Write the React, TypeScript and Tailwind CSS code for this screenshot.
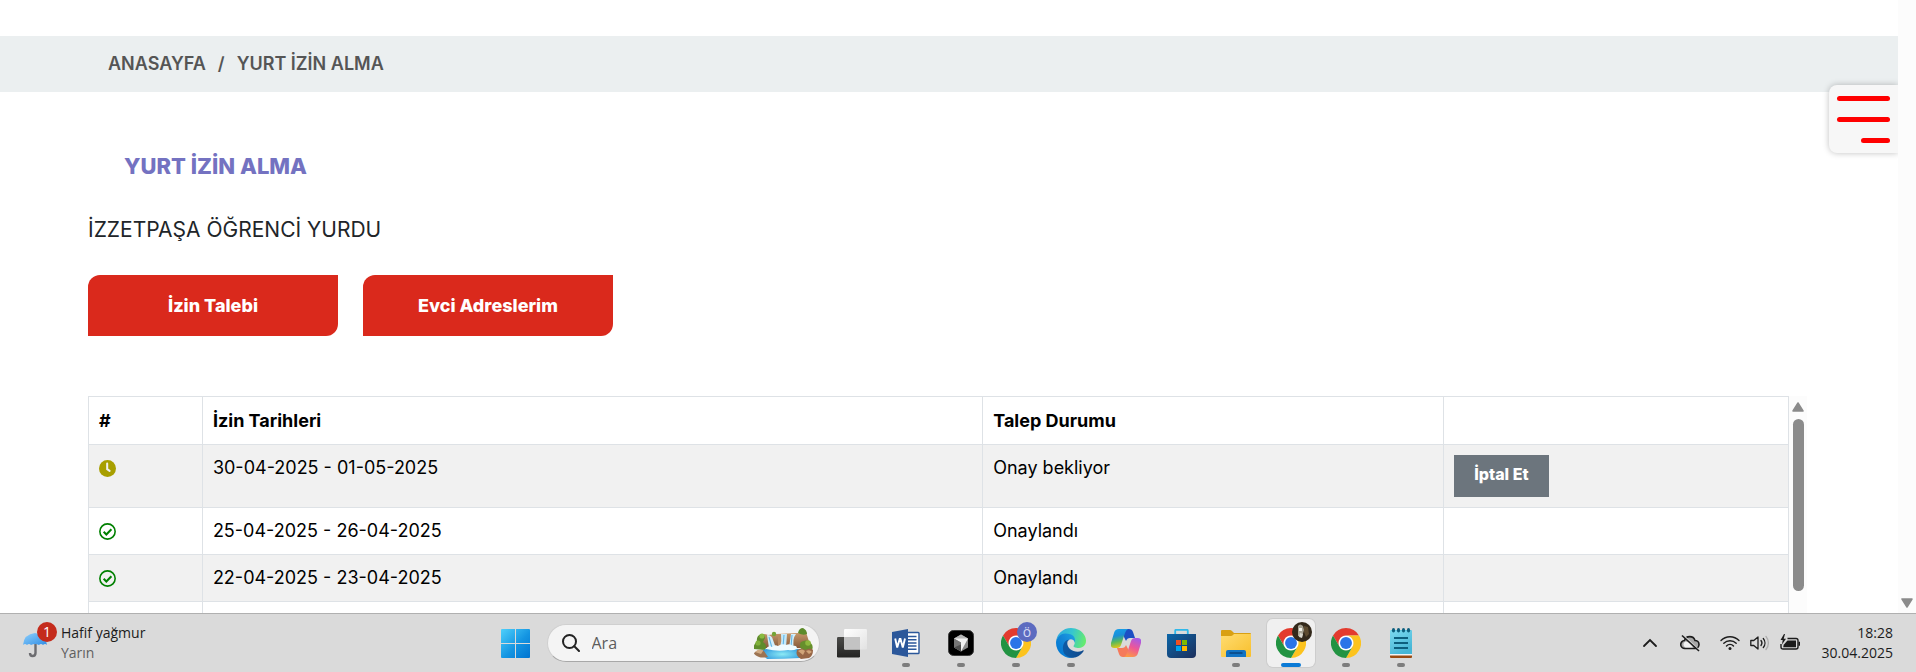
import type { ReactNode } from 'react';

type Leave = { dates: string; status: string; pending?: boolean };

const leaves: Leave[] = [
  { dates: '30-04-2025 - 01-05-2025', status: 'Onay bekliyor', pending: true },
  { dates: '25-04-2025 - 26-04-2025', status: 'Onaylandı' },
  { dates: '22-04-2025 - 23-04-2025', status: 'Onaylandı' },
];

function ClockIcon() {
  return (
    <svg viewBox="0 0 16 16" className="size-[17px]" role="img" aria-label="Bekliyor">
      <circle cx="8" cy="8" r="8" fill="#a89f00" />
      <path d="M7.7 3.4v5.2l2.3 1.6" fill="none" stroke="#f1f1f1" strokeWidth="1.9" strokeLinecap="round" />
    </svg>
  );
}

function CheckIcon() {
  return (
    <svg viewBox="0 0 16 16" className="size-[17px]" role="img" aria-label="Onaylandı" fill="none" stroke="#008000">
      <circle cx="8" cy="8" r="7.2" strokeWidth="1.5" />
      <path d="M4.4 8.3l2.5 2.5 4.8-4.9" strokeWidth="1.9" />
    </svg>
  );
}

function WindowsLogo() {
  return (
    <svg viewBox="0 0 29 29" className="size-[29px]" aria-hidden="true">
      <defs>
        <linearGradient id="win" x1="0" y1="0" x2="29" y2="29" gradientUnits="userSpaceOnUse">
          <stop offset="0" stopColor="#4fd0fb" />
          <stop offset="0.55" stopColor="#1495e2" />
          <stop offset="1" stopColor="#0073d0" />
        </linearGradient>
      </defs>
      <g fill="url(#win)">
        <path d="M1 0h13v14H0V1q0-1 1-1z" />
        <path d="M15 0h13q1 0 1 1v13H15z" />
        <path d="M0 15h14v14H1q-1 0-1-1z" />
        <path d="M15 15h14v13q0 1-1 1H15z" />
      </g>
    </svg>
  );
}

function Waterfall() {
  return (
    <svg viewBox="0 0 59 31" className="h-[31px] w-[59px]" aria-hidden="true">
      <defs>
        <radialGradient id="pool" cx="0.5" cy="0.6" r="0.6">
          <stop offset="0" stopColor="#8ceaf5" />
          <stop offset="1" stopColor="#2f97dd" />
        </radialGradient>
        <linearGradient id="rock" x1="0" y1="0" x2="0" y2="1">
          <stop offset="0" stopColor="#c99b6c" />
          <stop offset="1" stopColor="#86593a" />
        </linearGradient>
      </defs>
      <path d="M6 7q4-2 8 0l8-1 22-1 8-1 5 16H2z" fill="url(#rock)" />
      <path d="M0 21q-1-5 3-7-1-6 4-8 4 0 4 4l-2 4q5 3 2 8z" fill="#5f8c2c" />
      <circle cx="4" cy="15" r="2.6" fill="#80b03a" />
      <circle cx="8" cy="8" r="2.6" fill="#8abb40" />
      <circle cx="20" cy="6" r="2.2" fill="#74a436" />
      <path d="M44 5q1-5 5-5 4 2 4 6-4 2-9-1z" fill="#5d8b2b" />
      <path d="M47 14q5-3 9 0 4 4 2 8l-9 1q-5-4-2-9z" fill="#668f2c" />
      <circle cx="54" cy="15" r="2.8" fill="#8cb83e" />
      <path d="M24 8q4-3 7 0l-1 10h-6z" fill="#b98a60" />
      <path d="M13 7q5 0 6 5l3 8h-7z" fill="#d2effb" />
      <path d="M27 6h6l-1 14h-6q2-7 1-14z" fill="#c4e9fa" />
      <path d="M37 6h5q-4 5-2 14h-5z" fill="#d2effb" />
      <path d="M15 9l3 11M30 7l-1 12M38 7l-1 12" stroke="#63b6e6" strokeWidth="1.1" fill="none" />
      <path d="M9 22q16-6 39 0l-2 8q-16 1-33 1-5-4-4-9z" fill="url(#pool)" />
      <path d="M12 21q2-4 6-2 3-3 6-1 4-3 8-1 4-2 7 1 4-1 4 3-4 2-9 1-10 2-22-1z" fill="#f0fbff" />
      <path d="M0 25q5-5 10-2l4 6q-6 1-9 0-5-2-5-4z" fill="#9c7352" />
      <path d="M1 24q4-4 8-1l-2 3z" fill="#d0aa83" />
      <path d="M43 22q5-3 8 0 6-3 8 0 0 6-4 8l-8 1q-6-3-4-9z" fill="#986747" />
      <path d="M44 23q4-3 7 0l-2 4zM52 23q4-2 6 1l-3 2z" fill="#d1a579" />
    </svg>
  );
}

function TaskViewIcon() {
  return (
    <svg viewBox="0 0 31 29" className="h-[29px] w-[31px]" aria-hidden="true">
      <defs>
        <linearGradient id="tvDark" x1="0" y1="0" x2="0" y2="1">
          <stop offset="0" stopColor="#4a4a48" />
          <stop offset="1" stopColor="#242423" />
        </linearGradient>
        <linearGradient id="tvLight" x1="0" y1="0" x2="1" y2="1">
          <stop offset="0" stopColor="#ffffff" />
          <stop offset="1" stopColor="#e2e2e2" />
        </linearGradient>
      </defs>
      <rect x="1" y="8" width="23" height="20.5" rx="1.2" fill="url(#tvDark)" />
      <rect x="8" y="0" width="23" height="20.5" rx="1.2" fill="url(#tvLight)" />
      <path d="M8 8h16v12.5H9q-1 0-1-1z" fill="#c3c3c3" />
    </svg>
  );
}

function WordIcon() {
  return (
    <svg viewBox="0 0 28 28" className="size-7" aria-hidden="true">
      <rect x="14" y="3.5" width="13" height="21" rx="0.8" fill="#fff" stroke="#2b579a" strokeWidth="1.4" />
      <path d="M15 7.5h9.5M15 10.7h9.5M15 13.9h9.5M15 17.1h9.5M15 20.3h9.5" stroke="#2b579a" strokeWidth="1.5" />
      <path d="M0 3L16 0v28L0 25z" fill="#2b579a" />
      <path d="M3.2 9.5l2 9 2.5-8.500h.8l2.300 8.500 2.200-9" fill="none" stroke="#fff" strokeWidth="1.9" />
    </svg>
  );
}

function CubeIcon() {
  return (
    <svg viewBox="0 0 26 26" className="size-[26px]" aria-hidden="true">
      <rect x="0.5" y="0.5" width="25" height="25" rx="5" fill="#000" stroke="#3c3c3c" />
      <path d="M13 4.500l7 4v9l-7 4-7-4v-9z" fill="#8b8b8b" />
      <path d="M13 4.500l7 4-7 3.500-7-3.500z" fill="#b5b5b5" />
      <path d="M6 8.500h14L13 21.500V12.500z" fill="#f2f2f2" />
      <path d="M6 8.500l7 4v9l-7-4z" fill="#777" />
      <path d="M6 17.500l7-3v7z" fill="#505050" />
    </svg>
  );
}

function ChromeIcon() {
  return (
    <svg viewBox="0 0 48 48" className="size-[30px]" aria-hidden="true">
      <circle cx="24" cy="24" r="12" fill="#fff" />
      <path fill="#e33b2e" d="M24 12H44.781a23.994 23.994 0 0 0-41.564.003L13.608 30l.009-.002A11.985 11.985 0 0 1 24 12Z" />
      <path fill="#fcc31e" d="M34.391 30.003 24.001 48A23.994 23.994 0 0 0 44.780 12.003H23.999l-.003.009A11.985 11.985 0 0 1 34.391 30.003Z" />
      <path fill="#229342" d="M13.609 30.003 3.218 12.006A23.994 23.994 0 0 0 24.003 48L34.393 30.003l-.007-.007a11.985 11.985 0 0 1-20.777.007Z" />
      <circle cx="24" cy="24" r="9.5" fill="#2a74e8" />
    </svg>
  );
}

function EdgeIcon() {
  return (
    <svg viewBox="0 0 256 256" className="size-[30px]" aria-hidden="true">
      <defs>
        <linearGradient id="edgeA" x1="0.1" y1="0.5" x2="1" y2="0.5">
          <stop offset="0" stopColor="#0c59a4" />
          <stop offset="1" stopColor="#114a8b" />
        </linearGradient>
        <linearGradient id="edgeB" x1="1" y1="0.2" x2="0.2" y2="0.9">
          <stop offset="0" stopColor="#1b9de2" />
          <stop offset="0.5" stopColor="#1385d6" />
          <stop offset="1" stopColor="#0078d4" />
        </linearGradient>
        <linearGradient id="edgeC" x1="0" y1="0.3" x2="1" y2="0.5">
          <stop offset="0" stopColor="#2fa9e0" />
          <stop offset="0.5" stopColor="#36c6cf" />
          <stop offset="1" stopColor="#66eb6e" />
        </linearGradient>
      </defs>
      <path fill="url(#edgeC)" d="M152.330 148.860c-.81 1.050-3.300 2.500-3.300 5.660 0 2.610 1.700 5.120 4.720 7.230 14.380 10 41.490 8.680 41.560 8.680a59.560 59.560 0 0 0 30.270-8.350 61.380 61.380 0 0 0 30.430-52.880c.26-22.410-8-37.310-11.340-43.910C223.480 23.840 177.720 0 128 0A128 128 0 0 0 0 126.200c.48-36.540 36.800-66.050 80-66.050 3.500 0 23.460.34 42 10.070 16.340 8.580 24.900 18.940 30.850 29.210 6.180 10.670 7.280 24.150 7.280 29.520 0 5.370-2.740 13.330-7.800 19.910z" />
      <path fill="url(#edgeB)" d="M105.730 241.420A79.200 79.200 0 0 1 83 220.080a80.720 80.720 0 0 1 29.500-120.770c3.120-1.470 8.450-4.150 15.540-4a32.350 32.350 0 0 1 25.690 13 31.880 31.880 0 0 1 6.360 18.660c0-.21 24.460-79.600-80-79.600-43.900 0-80 41.660-80 78.210a130.150 130.150 0 0 0 12.110 56 128 128 0 0 0 156.380 67.110 75.550 75.550 0 0 1-62.780-7.270z" />
      <path fill="url(#edgeA)" transform="translate(-4.630 -4.920)" d="M235.680 195.460a93.730 93.730 0 0 1-10.540 4.710 101.870 101.870 0 0 1-35.900 6.460c-47.320 0-88.540-32.550-88.540-74.320A31.480 31.480 0 0 1 117.130 105c-42.800 1.800-53.800 46.400-53.800 72.530 0 73.880 68.090 81.370 82.760 81.370 7.910 0 19.840-2.300 27-4.560l1.310-.44a128.340 128.340 0 0 0 66.600-52.800 4 4 0 0 0-5.320-5.640z" />
    </svg>
  );
}

function CopilotIcon() {
  return (
    <svg viewBox="0 0 30 28" className="h-7 w-[30px]" aria-hidden="true">
      <defs>
        <linearGradient id="copA" x1="0.3" y1="0" x2="0.5" y2="1">
          <stop offset="0" stopColor="#179fe8" />
          <stop offset="0.35" stopColor="#1a8fd8" />
          <stop offset="0.65" stopColor="#58b95c" />
          <stop offset="1" stopColor="#f2c80f" />
        </linearGradient>
        <linearGradient id="copB" x1="0.7" y1="0" x2="0.3" y2="1">
          <stop offset="0" stopColor="#a65be8" />
          <stop offset="0.5" stopColor="#ee5796" />
          <stop offset="1" stopColor="#fb9a45" />
        </linearGradient>
      </defs>
      <path d="M13 0h5q3 0 4 3l2 6h-5q-3 0-4 3l-2-4z" fill="#1c4fc4" />
      <path d="M17 28h-5q-3 0-4-3l-2-6h5q3 0 4-3l2 4z" fill="#f57a5b" />
      <path d="M8 0h9q-2 1-3 4l-4 12q-1 3-4 3H3q-4 0-3-5l3-10q1-4 5-4z" fill="url(#copA)" />
      <path d="M22 28h-9q2-1 3-4l4-12q1-3 4-3h3q4 0 3 5l-3 10q-1 4-5 4z" fill="url(#copB)" />
    </svg>
  );
}

function StoreIcon() {
  return (
    <svg viewBox="0 0 29 29" className="size-[29px]" aria-hidden="true">
      <defs>
        <linearGradient id="store" x1="0" y1="0" x2="1" y2="1">
          <stop offset="0" stopColor="#0b66a8" />
          <stop offset="1" stopColor="#1d2f5c" />
        </linearGradient>
      </defs>
      <path d="M8.200 6V1.800q0-1 1-1h10.600q1 0 1 1V6" fill="none" stroke="#2fb8ea" strokeWidth="1.8" />
      <path d="M0 5h29v20q0 4-4 4H4q-4 0-4-4z" fill="url(#store)" />
      <path d="M9 11h5v5H9z" fill="#f25022" />
      <path d="M15 11h5v5h-5z" fill="#7fba00" />
      <path d="M9 17h5v5H9z" fill="#00a4ef" />
      <path d="M15 17h5v5h-5z" fill="#ffb900" />
    </svg>
  );
}

function FolderIcon() {
  return (
    <svg viewBox="0 0 30 27" className="h-[27px] w-[30px]" aria-hidden="true">
      <defs>
        <linearGradient id="folder" x1="0" y1="0" x2="1" y2="1">
          <stop offset="0" stopColor="#ffdc70" />
          <stop offset="1" stopColor="#f8bf2c" />
        </linearGradient>
      </defs>
      <path d="M1 0h8q1 0 2 1l2 2h16q1 0 1 1v5H0V1q0-1 1-1z" fill="#d9a012" />
      <path d="M0 6h10q1 0 2-1l1-1h17v22q0 1-1 1H1q-1 0-1-1z" fill="url(#folder)" />
      <path d="M5 27v-5q0-2 2-2h16q2 0 2 2v5z" fill="#1273c4" />
      <path d="M9 23h12" stroke="#0a4680" strokeWidth="1.4" strokeLinecap="round" />
    </svg>
  );
}

function NotepadIcon() {
  return (
    <svg viewBox="0 0 22 31" className="h-[31px] w-[22px]" aria-hidden="true">
      <defs>
        <linearGradient id="pad" x1="0" y1="0" x2="0.5" y2="1">
          <stop offset="0" stopColor="#7ddaf0" />
          <stop offset="1" stopColor="#46b6d6" />
        </linearGradient>
      </defs>
      <path d="M0 26h22v3q0 1-1 1H1q-1 0-1-1z" fill="#9a4a12" />
      <path d="M0 25h22v2.500H0z" fill="#f3f3f3" />
      <path d="M0 3q0-1 1-1h20q1 0 1 1v23H0z" fill="url(#pad)" />
      <path d="M4 10h14M4 15h14M4 20h14" stroke="#0d5f7e" strokeWidth="2" />
      <g fill="#0d5f7e">
        <ellipse cx="3.5" cy="2.2" rx="1.6" ry="2.2" />
        <ellipse cx="8.5" cy="2.2" rx="1.6" ry="2.2" />
        <ellipse cx="13.5" cy="2.2" rx="1.6" ry="2.2" />
        <ellipse cx="18.5" cy="2.2" rx="1.6" ry="2.2" />
      </g>
    </svg>
  );
}

function AvatarPhoto() {
  return (
    <svg viewBox="0 0 20 20" className="absolute -right-1.5 -top-1.5 size-5" aria-hidden="true">
      <circle cx="10" cy="10" r="10" fill="#33291b" />
      <path d="M6 4q2-3 5 0l1 4-2 7-4-1z" fill="#a9a595" />
      <path d="M7 6h3v3H7z" fill="#f2f2ea" />
      <path d="M12 4l4 1 1 7-3 3-2-5z" fill="#5d4b30" />
      <path d="M8 11l3 1-1 4-3-1z" fill="#d8d6cc" />
    </svg>
  );
}

type App = { name: string; icon: ReactNode; state?: 'open' | 'active' };

const apps: App[] = [
  { name: 'Görev görünümü', icon: <TaskViewIcon /> },
  { name: 'Word', icon: <WordIcon />, state: 'open' },
  { name: 'Cursor', icon: <CubeIcon />, state: 'open' },
  {
    name: 'Chrome profil Ö',
    icon: (
      <>
        <ChromeIcon />
        <span className="absolute -right-1.5 -top-1.5 flex size-5 items-center justify-center rounded-full bg-[#5c6bc0] text-sm leading-none text-[#d5daf5]">
          ö
        </span>
      </>
    ),
    state: 'open',
  },
  { name: 'Edge', icon: <EdgeIcon />, state: 'open' },
  { name: 'Copilot', icon: <CopilotIcon /> },
  { name: 'Microsoft Store', icon: <StoreIcon /> },
  { name: 'Dosya Gezgini', icon: <FolderIcon />, state: 'open' },
  {
    name: 'Chrome profil',
    icon: (
      <>
        <ChromeIcon />
        <AvatarPhoto />
      </>
    ),
    state: 'active',
  },
  { name: 'Chrome', icon: <ChromeIcon />, state: 'open' },
  { name: 'Not Defteri', icon: <NotepadIcon />, state: 'open' },
];

function TaskbarApp({ app }: { app: App }) {
  const active = app.state === 'active';
  return (
    <div className="flex w-[55px] justify-center">
      <button
        type="button"
        aria-label={app.name}
        className={
          active
            ? 'relative flex size-12 items-center justify-center rounded-md bg-[#f0f0f0] ring-1 ring-[#cdcdcd]'
            : 'relative flex size-12 items-center justify-center'
        }
      >
        <span className="relative flex">{app.icon}</span>
        {app.state && (
          <span
            className={
              active
                ? 'absolute bottom-0 left-1/2 h-1 w-5 -translate-x-1/2 rounded-full bg-[#0a7ad6]'
                : 'absolute bottom-0 left-1/2 h-1 w-2 -translate-x-1/2 rounded-full bg-[#7d7d7d]'
            }
          />
        )}
      </button>
    </div>
  );
}

function Taskbar() {
  return (
    <footer className="grid h-[59px] shrink-0 grid-cols-[1fr_auto_1fr] items-center border-t border-[#b0b0b0] bg-[#dadada] font-['Open_Sans','Noto_Sans',sans-serif] text-sm text-[#1c1c1c]">
      <button type="button" className="flex items-center gap-2.5 justify-self-start pl-[23px] text-left">
        <span className="relative flex">
          <svg viewBox="0 0 28 30" className="h-[30px] w-7" aria-hidden="true">
            <defs>
              <linearGradient id="umb" x1="0" y1="0" x2="1" y2="1">
                <stop offset="0" stopColor="#8fd0fb" />
                <stop offset="1" stopColor="#2e8de6" />
              </linearGradient>
            </defs>
            <path d="M12.500 14v11q0 3-3 3-2.500 0-2.500-3" fill="none" stroke="#6c6c70" strokeWidth="2.4" />
            <path d="M0 17q1-11 12-12 11 1 12 12-2-2-4 0-2-2-4 0-4-2-8 0-2-2-4 0-2-2-4 0z" fill="url(#umb)" />
          </svg>
          <span className="absolute -right-1.5 -top-1.5 flex size-5 items-center justify-center rounded-full bg-[#c42b1c] text-sm leading-none text-white">
            1
          </span>
        </span>
        <span className="flex flex-col leading-5">
          <span>Hafif yağmur</span>
          <span className="text-[#5f5f5f]">Yarın</span>
        </span>
      </button>

      <div className="flex items-center">
        <button type="button" aria-label="Başlat" className="flex w-[55px] justify-center">
          <WindowsLogo />
        </button>
        <label className="mx-1 flex h-[38px] w-[273px] items-center rounded-full border border-[#cfcfcf] border-b-[#a8a8a8] bg-[#f4f4f4] pl-3.5 pr-1.5">
          <svg viewBox="0 0 18 18" className="size-[18px] shrink-0" fill="none" stroke="#222" strokeWidth="2" strokeLinecap="round" aria-hidden="true">
            <circle cx="7.5" cy="7.5" r="6.5" />
            <path d="M12.300 12.300L17 17" />
          </svg>
          <input
            type="text"
            aria-label="Ara"
            placeholder="Ara"
            className="ml-3 w-full min-w-0 bg-transparent text-base outline-none placeholder:text-[#5c5c5c]"
          />
          <span className="shrink-0">
            <Waterfall />
          </span>
        </label>
        {apps.map((app) => (
          <TaskbarApp key={app.name} app={app} />
        ))}
      </div>

      <div className="flex items-center justify-self-end pr-[23px]">
        <button type="button" aria-label="Gizli simgeler" className="mr-[22px]">
          <svg viewBox="0 0 16 16" className="size-4" fill="none" stroke="#1c1c1c" strokeWidth="1.8" strokeLinecap="round" aria-hidden="true">
            <path d="M2 11l6-6 6 6" />
          </svg>
        </button>
        <svg viewBox="0 0 20 18" className="mr-5 h-[18px] w-5" aria-hidden="true">
          <path d="M5 14.500a4 4 0 0 1-.5-8A5.500 5.500 0 0 1 15 6.500a4 4 0 0 1 0 8z" fill="#a8a8a8" stroke="#1c1c1c" strokeWidth="1.6" />
          <path d="M5.500 13.500a3.200 3.200 0 0 1 0-6q4 0 7.500 6z" fill="#f0f0f0" />
          <path d="M3.500 1.500l16 15" stroke="#dadada" strokeWidth="1.4" />
          <path d="M2 1.500l17 15.500" stroke="#1c1c1c" strokeWidth="1.6" />
        </svg>
        <button type="button" aria-label="Ağ, ses ve pil" className="flex items-center gap-2.5">
          <svg viewBox="0 0 20 18" className="h-[18px] w-5" fill="none" stroke="#1c1c1c" strokeWidth="1.4" strokeLinecap="round" aria-hidden="true">
            <path d="M1 6.500a12.700 12.700 0 0 1 18 0M3.800 9.300a8.700 8.700 0 0 1 12.400 0M6.500 12a5 5 0 0 1 7 0" />
            <circle cx="10" cy="14.5" r="1.5" fill="#1c1c1c" stroke="none" />
          </svg>
          <svg viewBox="0 0 20 18" className="h-[18px] w-5" fill="none" stroke="#1c1c1c" strokeWidth="1.3" strokeLinecap="round" strokeLinejoin="round" aria-hidden="true">
            <path d="M.8 6.500h3L8 3v12l-4.200-3.500h-3z" />
            <path d="M11 6.500a4 4 0 0 1 0 5M13.300 4.500a7 7 0 0 1 0 9" />
            <path d="M16 2.500a10 10 0 0 1 0 13" stroke="#adadad" />
          </svg>
          <svg viewBox="0 0 20 18" className="h-[18px] w-5" aria-hidden="true">
            <path d="M7 4.500h8.500q2 0 2 2v6.500q0 2-2 2h-13q-2 0-2-2v-3" transform="translate(.5 0)" fill="none" stroke="#1c1c1c" strokeWidth="1.4" />
            <path d="M7.500 6.400h8.500v6.800H3.200l.5-2.500z" fill="#1c1c1c" />
            <path d="M18.500 7.700h1.500v4h-1.500z" fill="#1c1c1c" />
            <path d="M4 0L.5 6h2.200L2 10.500l4-5.700H3.700L5 0z" fill="#1c1c1c" />
          </svg>
        </button>
        <button type="button" className="ml-[22px] flex flex-col text-right leading-5">
          <span>18:28</span>
          <span>30.04.2025</span>
        </button>
      </div>
    </footer>
  );
}

function ScrollArrow({ down = false }: { down?: boolean }) {
  return (
    <svg viewBox="0 0 12 10" className={down ? 'h-2.5 w-3 shrink-0 rotate-180' : 'h-2.5 w-3 shrink-0'} aria-hidden="true">
      <path d="M6 1l5 8H1z" fill="#8b8b8b" stroke="#8b8b8b" strokeWidth="1.5" strokeLinejoin="round" />
    </svg>
  );
}

const cell = 'border border-[#dee2e6] px-2.5 py-2.5 align-top';

export default function App() {
  return (
    <div className="flex h-screen flex-col overflow-hidden bg-white font-[Inter,'Noto_Sans',sans-serif] text-lg text-black">
      <div className="flex min-h-0 flex-1">
        <div className="relative flex min-w-0 flex-1 flex-col">
          <nav aria-label="Konum" className="mt-9 flex h-14 shrink-0 items-center gap-3 bg-[#ebeff0] pl-[108px] font-semibold text-[#555]">
            <a href="#anasayfa">ANASAYFA</a>
            <span>/</span>
            <a href="#izin">YURT İZİN ALMA</a>
          </nav>

          <button
            type="button"
            aria-label="Menü"
            className="absolute right-0 top-[85px] flex h-[68px] w-[69px] flex-col items-end justify-center gap-4 rounded-l-lg bg-[#f7f7f7] pr-2 shadow-[0_0_6px_rgba(0,0,0,0.25)] [clip-path:inset(-8px_0_-8px_-8px)]"
          >
            <span className="h-[5px] w-[53px] rounded-full bg-[#ff0000]" />
            <span className="h-[5px] w-[53px] rounded-full bg-[#ff0000]" />
            <span className="h-[5px] w-[29px] rounded-full bg-[#ff0000]" />
          </button>

          <main className="flex min-h-0 flex-1 flex-col pl-[88px] pr-[91px] pt-14">
            <h1 className="pl-9 text-[22px] font-extrabold leading-9 text-[#7472c1]">YURT İZİN ALMA</h1>
            <h2 className="mt-7 text-[21px] leading-9 text-[#212529]">İZZETPAŞA ÖĞRENCİ YURDU</h2>
            <div className="mt-[27px] flex gap-[25px] font-extrabold text-white">
              <button type="button" className="h-[61px] w-[250px] rounded-br-xl rounded-tl-xl bg-[#da291c]">
                İzin Talebi
              </button>
              <button type="button" className="h-[61px] w-[250px] rounded-br-xl rounded-tl-xl bg-[#da291c]">
                Evci Adreslerim
              </button>
            </div>

            <div className="mt-[60px] flex min-h-0 flex-1">
              <div className="min-w-0 flex-1 overflow-hidden">
                <table className="w-full table-fixed border-collapse text-left leading-[26px]">
                  <colgroup>
                    <col className="w-[6.7%]" />
                    <col className="w-[45.9%]" />
                    <col className="w-[27.1%]" />
                    <col />
                  </colgroup>
                  <thead>
                    <tr className="font-bold leading-[27px]">
                      <th className={cell}>#</th>
                      <th className={cell}>İzin Tarihleri</th>
                      <th className={cell}>Talep Durumu</th>
                      <th className={cell} aria-label="İşlem" />
                    </tr>
                  </thead>
                  <tbody>
                    {leaves.map((leave) => (
                      <tr key={leave.dates} className="odd:bg-[#f1f1f1]">
                        <td className={cell}>
                          <span className="flex h-[26px] items-center">{leave.pending ? <ClockIcon /> : <CheckIcon />}</span>
                        </td>
                        <td className={cell}>{leave.dates}</td>
                        <td className={cell}>{leave.status}</td>
                        <td className={cell}>
                          {leave.pending && (
                            <button type="button" className="block h-[42px] w-[95px] bg-[#6c757d] pb-1 text-base font-extrabold text-white">
                              İptal Et
                            </button>
                          )}
                        </td>
                      </tr>
                    ))}
                    <tr>
                      <td className={cell}>
                        <span className="block h-[26px]" />
                      </td>
                      <td className={cell} />
                      <td className={cell} />
                      <td className={cell} />
                    </tr>
                  </tbody>
                </table>
              </div>
              <div className="flex w-[18px] flex-col items-center bg-[#fcfcfc] pt-1.5">
                <ScrollArrow />
                <div className="mt-[7px] h-[172px] w-[11px] rounded-full bg-[#8b8b8b]" />
              </div>
            </div>
          </main>
        </div>

        <div className="flex w-[18px] shrink-0 flex-col items-center justify-end bg-[#fcfcfc] pb-[5px]">
          <ScrollArrow down />
        </div>
      </div>
      <Taskbar />
    </div>
  );
}
